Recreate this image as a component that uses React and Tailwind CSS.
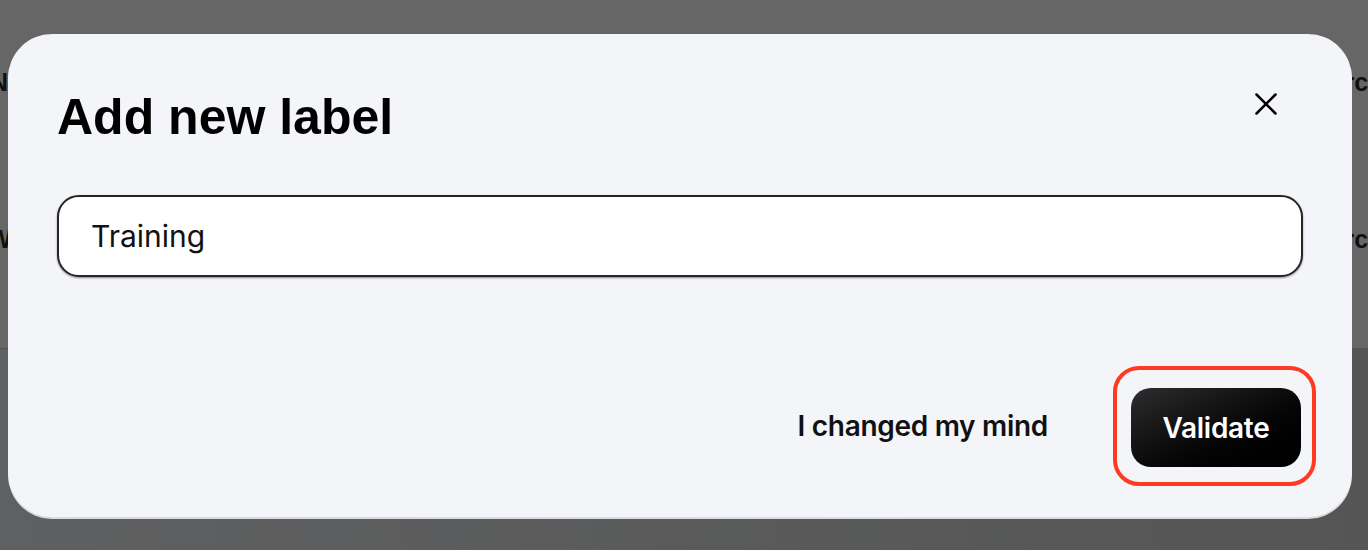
import { X } from 'lucide-react'

const bgText = 'text-[25px] font-bold leading-none text-[#111] [font-family:"Liberation_Sans",Arial,sans-serif]'

export default function App() {
  return (
    <div className="relative w-[1368px] h-[550px] overflow-hidden bg-[#5a5a5a]">
      {/* page behind the overlay */}
      <div className="flex flex-col">
        <div className="h-[348px] bg-[#666666] flex flex-col">
          <div className={`flex justify-between mt-[70px] ${bgText}`}>
            <span className="ml-[-10px]">N</span>
            <span className="mr-[-14px]">rce</span>
          </div>
          <div className={`flex justify-between mt-[132px] ${bgText}`}>
            <span className="ml-[-12px]">W</span>
            <span className="mr-[-14px]">rce</span>
          </div>
        </div>
        <div className="h-px bg-[#525252]" />
        <div className="h-[201px] bg-gradient-to-r from-[#5f6061] to-[#555555]" />
      </div>

      {/* dialog */}
      <div className="absolute inset-0 pl-[8px] pt-[34px]">
        <div className="w-[1344px] h-[483px] rounded-[44px] bg-[#f4f5f9] shadow-[0_2px_0_#dcdcdf] pt-[58px] px-[49px] pb-[31px] flex flex-col">
          <div className="flex items-start justify-between">
            <h2 className="text-[50px] font-bold leading-[50px] text-black [font-family:'Liberation_Sans',Arial,sans-serif]">
              Add new label
            </h2>
            <button className="w-[48px] h-[48px] mt-[-12px] mr-[13px] flex items-center justify-center text-black">
              <X size={38} strokeWidth={1.6} />
            </button>
          </div>

          <div className="mt-[53px] h-[82px] rounded-[22px] border-2 border-[#262626] bg-white shadow-[0_1px_2px_rgba(0,0,0,0.45)] flex items-center pl-[32px]">
            <span className="text-[30px] text-[#111] [font-family:Inter,'Noto_Sans',sans-serif]">Training</span>
          </div>

          <div className="mt-auto flex items-center justify-end mr-[-13px] [font-family:Inter,'Liberation_Sans',sans-serif]">
            <button className="text-[28px] font-semibold tracking-[-0.3px] text-[#111] mr-[65px]">I changed my mind</button>
            <div className="rounded-[26px] border-4 border-[#ff3a22] pt-[18px] pb-[15px] pl-[14px] pr-[11px]">
              <button className="w-[170px] h-[79px] rounded-[20px] bg-gradient-to-br from-[#2e2e2e] to-[#000000] text-white text-[28px] font-semibold tracking-[-0.3px]">
                Validate
              </button>
            </div>
          </div>
        </div>
      </div>
    </div>
  )
}
